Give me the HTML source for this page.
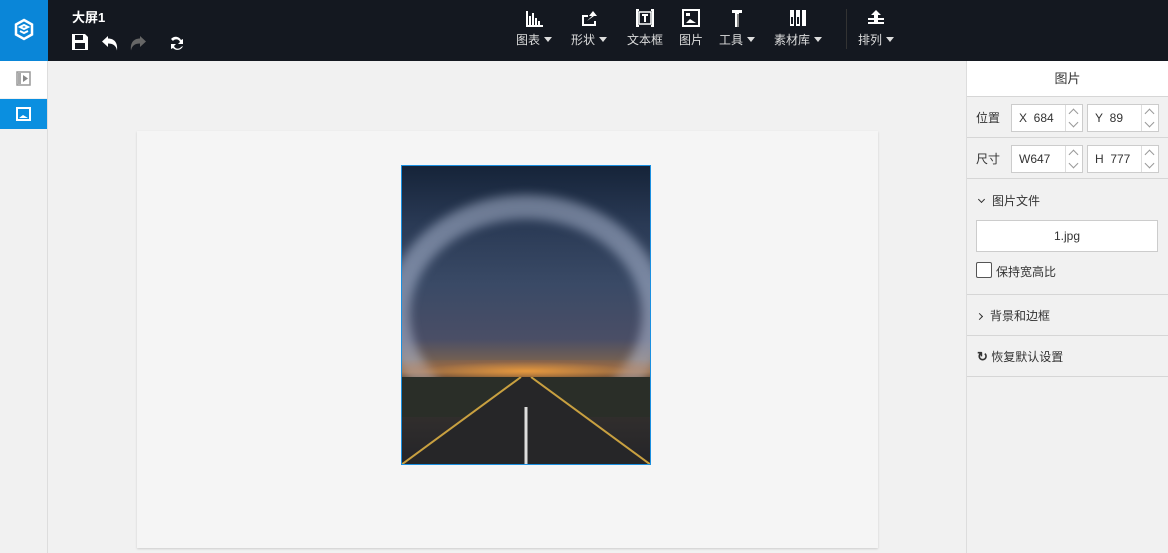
<!DOCTYPE html>
<html><head><meta charset="utf-8"><style>
*{margin:0;padding:0;box-sizing:border-box}
body{width:1168px;height:553px;overflow:hidden;background:#f1f1f1;font-family:"Liberation Sans","Noto Sans CJK SC",sans-serif;font-size:12px;color:#333;position:relative}
.top{position:absolute;left:0;top:0;width:1168px;height:61px;background:#141820}
.logo{position:absolute;left:0;top:0;width:48px;height:61px;background:#0a86d8}
.side{position:absolute;left:0;top:61px;width:48px;height:492px;background:#f1f1f1;border-right:1px solid #ddd}
.tool{position:absolute;top:8px;text-align:center;color:#ddd;font-size:12px}
.tool svg{display:block;margin:0 auto 3px}
.tri{display:inline-block;border-left:4px solid transparent;border-right:4px solid transparent;border-top:5px solid #ddd;vertical-align:2px;margin-left:4px}
.right{position:absolute;left:966px;top:61px;width:202px;height:492px;background:#f1f1f1;border-left:1px solid #ddd}
.row{position:absolute;left:0;width:201px;border-bottom:1px solid #d6d6d6}
.inp{position:absolute;height:28px;width:72px;background:#fff;border:1px solid #ccc;font-size:12px;line-height:26px;padding-left:7px}
.spin{position:absolute;right:0;top:0;width:17px;height:26px;border-left:1px solid #ddd}
.spin:before{content:"";position:absolute;left:4px;top:5px;width:6px;height:6px;border-left:1px solid #999;border-top:1px solid #999;transform:rotate(45deg)}
.spin:after{content:"";position:absolute;left:4px;top:14px;width:6px;height:6px;border-right:1px solid #999;border-bottom:1px solid #999;transform:rotate(45deg)}
.chev{display:inline-block;width:5px;height:5px;border-right:1.5px solid #333;border-bottom:1.5px solid #333;margin-right:8px}
</style></head><body>
<div class="top"></div>
<div class="logo"><svg width="48" height="61" viewBox="0 0 48 61"><path d="M24 20l8 4.5v10L24 39l-8-4.5v-10z" fill="none" stroke="#fff" stroke-width="2.5"/><path d="M20 27l4-2 4 2-4 2zM20 31l4 2 4-2" fill="none" stroke="#fff" stroke-width="2"/></svg></div>
<div style="position:absolute;left:72px;top:7px;color:#fff;font-size:13px;font-weight:bold">大屏1</div>
<svg style="position:absolute;left:71px;top:33px" width="120" height="20" viewBox="0 0 120 20">
<path d="M1 1h13l3 3v13H1z" fill="#fff"/><rect x="4" y="2" width="8" height="5" fill="#141820"/><rect x="4" y="10" width="10" height="6" fill="#141820"/>
<path d="M37 3l-6 5.5 6 5.5v-3.5c5 0 8 2 9 7 1-8-3-12-9-12z" fill="#fff"/>
<path d="M69 3l6 5.5-6 5.5v-3.5c-5 0-8 2-9 7-1-8 3-12 9-12z" fill="#666"/>
<path d="M100 6a6 6 0 0 1 10 1l2-1v5h-5l2-2a4 4 0 0 0-7-1zM112 13a6 6 0 0 1-10 2l-2 1v-5h5l-2 2a4 4 0 0 0 7 1z" fill="#fff"/></svg>
<div class="tool" style="left:516px"><svg width="20" height="20"><path d="M3 3v15h16M6 8v9M9 5v12M12 10v7M15 13v4" stroke="#fff" stroke-width="2" fill="none"/></svg>图表<span class="tri"></span></div>
<div class="tool" style="left:571px"><svg width="20" height="20"><path d="M3 7h6v2H5v7h10v-3h2v5H3z" fill="#fff"/><path d="M8 13l5-5h-3l4-5 4 5h-3z" fill="#fff"/></svg>形状<span class="tri"></span></div>
<div class="tool" style="left:627px"><svg width="20" height="20"><path d="M4 2H2v16h2M16 2h2v16h-2" stroke="#fff" stroke-width="2" fill="none"/><rect x="4" y="4" width="12" height="12" fill="none" stroke="#fff" stroke-width="1.5"/><path d="M7 7h6M10 7v7" stroke="#fff" stroke-width="2"/></svg>文本框</div>
<div class="tool" style="left:679px"><svg width="20" height="20"><rect x="2" y="2" width="16" height="16" fill="none" stroke="#fff" stroke-width="2"/><path d="M5 15l4-4 6 4z" fill="#fff"/><rect x="5" y="5" width="4" height="3" fill="#fff"/></svg>图片</div>
<div class="tool" style="left:719px"><svg width="20" height="20"><path d="M5 2h10v3h-3v14H8V5H5z" fill="#fff"/><rect x="10" y="6" width="2" height="13" fill="#888"/></svg>工具<span class="tri"></span></div>
<div class="tool" style="left:774px"><svg width="20" height="20"><rect x="2" y="2" width="4" height="16" fill="#fff"/><rect x="8" y="2" width="4" height="16" fill="#fff"/><rect x="14" y="2" width="4" height="16" fill="#fff"/><rect x="3" y="9" width="2" height="7" fill="#141820"/><rect x="9" y="9" width="2" height="7" fill="#141820"/></svg>素材库<span class="tri"></span></div>
<div style="position:absolute;left:846px;top:9px;width:1px;height:40px;background:#333"></div>
<div class="tool" style="left:858px"><svg width="20" height="20"><path d="M10 2l5 5h-3v3h6v2h-6v2h6v2H2v-2h6v-2H2v-2h6V7H5z" fill="#fff"/></svg>排列<span class="tri"></span></div>
<div class="side">
<div style="position:absolute;left:0;top:0;width:47px;height:37px;background:#fff"></div>
<svg style="position:absolute;left:16px;top:10px" width="16" height="16"><rect x="1" y="1" width="13" height="13" fill="none" stroke="#999" stroke-width="1.5"/><rect x="2" y="2" width="3" height="11" fill="#aaa"/><path d="M7 4l5 3.5L7 11z" fill="#888"/></svg>
<div style="position:absolute;left:0;top:38px;width:47px;height:30px;background:#0a8fe0"></div>
<svg style="position:absolute;left:16px;top:46px" width="16" height="14"><rect x="1" y="1" width="13" height="12" fill="none" stroke="#fff" stroke-width="2"/><path d="M3 11l4-3 5 3z" fill="#fff"/></svg>
</div>
<div style="position:absolute;left:137px;top:131px;width:741px;height:417px;background:#f5f5f5;box-shadow:0 1px 2px rgba(0,0,0,.15)"></div>
<div style="position:absolute;left:401px;top:165px;width:250px;height:300px;overflow:hidden;background:linear-gradient(#152338 0%,#2a3a55 20%,#3a4a66 40%,#4a4e66 58%,#8a6a48 69%,#3a3530 72%,#242428 100%)">
<div style="position:absolute;left:-15px;top:30px;width:280px;height:240px;border-radius:50%;border:24px solid rgba(200,210,235,.45);border-bottom-color:transparent;filter:blur(5px)"></div>
<div style="position:absolute;left:0;top:195px;width:250px;height:22px;background:radial-gradient(ellipse at center,rgba(245,160,60,.85),rgba(200,110,50,.25) 60%,transparent)"></div>
<div style="position:absolute;left:0;top:212px;width:250px;height:40px;background:#2a2e28"></div>
<svg style="position:absolute;left:0;top:212px" width="250" height="88"><path d="M118 0L132 0 250 88H0z" fill="#262628"/><path d="M120 0L0 88M130 0L250 88" stroke="#c8a040" stroke-width="2"/><path d="M125 30v58" stroke="#ddd" stroke-width="3"/></svg>
</div>
<div style="position:absolute;left:401px;top:165px;width:250px;height:300px;border:1px solid #1a8fe0"></div>
<div class="right">
<div class="row" style="top:0;height:36px;background:#fff;text-align:center;line-height:36px;font-size:13px">图片</div>
<div class="row" style="top:36px;height:41px"><span style="position:absolute;left:9px;top:12px">位置</span>
<div class="inp" style="left:44px;top:7px">X&nbsp; 684<div class="spin"></div></div><div class="inp" style="left:120px;top:7px">Y&nbsp; 89<div class="spin"></div></div></div>
<div class="row" style="top:77px;height:41px"><span style="position:absolute;left:9px;top:12px">尺寸</span>
<div class="inp" style="left:44px;top:7px">W647<div class="spin"></div></div><div class="inp" style="left:120px;top:7px">H&nbsp; 777<div class="spin"></div></div></div>
<div class="row" style="top:118px;height:116px">
<span style="position:absolute;left:12px;top:13px"><span class="chev" style="transform:rotate(45deg);vertical-align:3px"></span>图片文件</span>
<div style="position:absolute;left:9px;top:41px;width:182px;height:32px;background:#fff;border:1px solid #ccc;text-align:center;line-height:30px">1.jpg</div>
<div style="position:absolute;left:9px;top:83px;width:16px;height:16px;border:1px solid #555;border-radius:2px;background:#fff"></div>
<span style="position:absolute;left:29px;top:84px">保持宽高比</span></div>
<div class="row" style="top:234px;height:41px"><span style="position:absolute;left:10px;top:12px"><span class="chev" style="transform:rotate(-45deg);vertical-align:1px"></span>背景和边框</span></div>
<div class="row" style="top:275px;height:41px"><span style="position:absolute;left:10px;top:12px"><b style="font-size:13px">↻</b> 恢复默认设置</span></div>
</div>
</body></html>
